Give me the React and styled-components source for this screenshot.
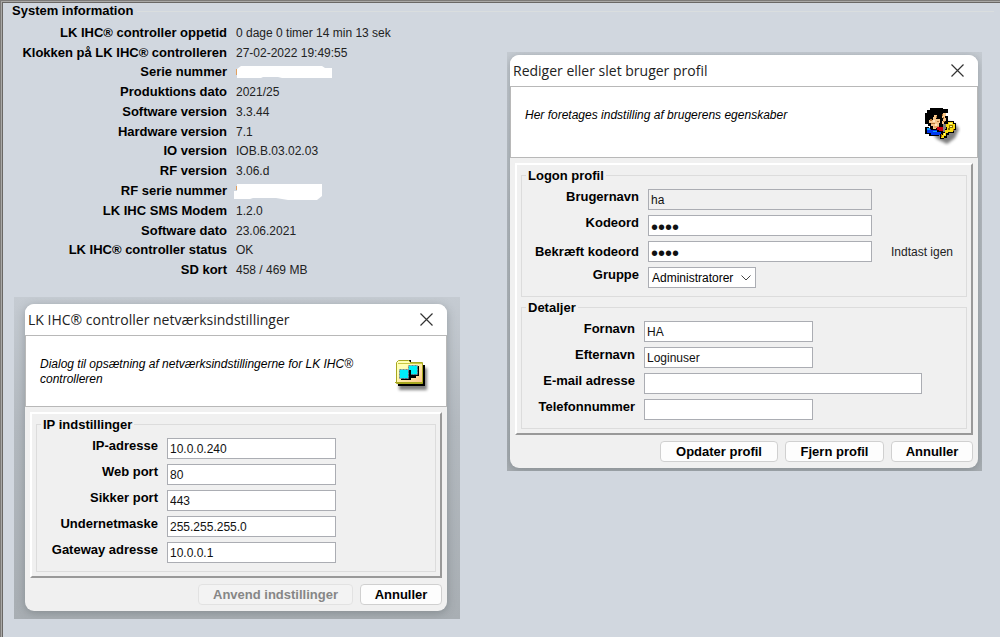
import React, { useState } from "react";
import styled, { createGlobalStyle } from "styled-components";

const systemInfo = [
  { label: "LK IHC® controller oppetid", value: "0 dage 0 timer 14 min 13 sek" },
  { label: "Klokken på LK IHC® controlleren", value: "27-02-2022 19:49:55" },
  { label: "Serie nummer", mask: "serial" },
  { label: "Produktions dato", value: "2021/25" },
  { label: "Software version", value: "3.3.44" },
  { label: "Hardware version", value: "7.1" },
  { label: "IO version", value: "IOB.B.03.02.03" },
  { label: "RF version", value: "3.06.d" },
  { label: "RF serie nummer", mask: "rf" },
  { label: "LK IHC SMS Modem", value: "1.2.0" },
  { label: "Software dato", value: "23.06.2021" },
  { label: "LK IHC® controller status", value: "OK" },
  { label: "SD kort", value: "458 / 469 MB" },
];

const networkFields = [
  { id: "ip", label: "IP-adresse", value: "10.0.0.240" },
  { id: "web", label: "Web port", value: "80" },
  { id: "secure", label: "Sikker port", value: "443" },
  { id: "mask", label: "Undernetmaske", value: "255.255.255.0" },
  { id: "gateway", label: "Gateway adresse", value: "10.0.0.1" },
];

const detailFields = [
  { id: "firstname", label: "Fornavn", value: "HA" },
  { id: "lastname", label: "Efternavn", value: "Loginuser" },
  { id: "email", label: "E-mail adresse", value: "", wide: true },
  { id: "phone", label: "Telefonnummer", value: "" },
];

const CloseIcon = () => (
  <svg width="13" height="13" viewBox="0 0 13 13" aria-hidden="true">
    <path d="M0.5 0.5 L12.5 12.5 M12.5 0.5 L0.5 12.5" stroke="#333" strokeWidth="1.2" fill="none" />
  </svg>
);

const FolderIcon = () => (
  <svg width="35" height="40" viewBox="0 -2 35 40" aria-hidden="true">
    <defs>
      <linearGradient id="folder" x1="0" y1="0" x2="1" y2="1">
        <stop offset="0.3" stopColor="#ffffb4" />
        <stop offset="1" stopColor="#ffc48c" />
      </linearGradient>
      <filter id="folderShadow" x="-20%" y="-20%" width="140%" height="140%">
        <feGaussianBlur stdDeviation="1.5" />
      </filter>
    </defs>
    <rect x="4" y="9" width="28" height="22" fill="#000" opacity="0.5" filter="url(#folderShadow)" />
    <path d="M3 6h27v21H3z" fill="#000" />
    <path d="M14 1h2v2h11v2H15z" fill="#000" />
    <path d="M1.5 24.5V3.5l2-2h10l2 2h12v21z" fill="url(#folder)" stroke="#a8a820" />
    <path d="M3 4.5h24" stroke="#c8c840" />
    <path d="M15 7h9v10h-3v2H15z" fill="#000" />
    <rect x="13.5" y="6.5" width="9" height="9" fill="#00f0f8" stroke="#80808c" strokeDasharray="2 1" />
    <path d="M6 11h10v10H6z" fill="#000" />
    <rect x="4.5" y="10.5" width="9" height="9" fill="#00f0f8" stroke="#80808c" strokeDasharray="2 1" />
    <path d="M0 23.5h28" stroke="#a8a820" />
  </svg>
);

const UserIcon = () => (
  <svg width="36" height="38" viewBox="0 0 36 38" aria-hidden="true">
    <defs>
      <filter id="userShadow" x="-20%" y="-20%" width="140%" height="150%">
        <feGaussianBlur stdDeviation="1.5" />
      </filter>
    </defs>
    <path
      d="M8 26l10-14 12 4 4 5-4 9-8 6-10-5z"
      fill="#000"
      opacity="0.5"
      filter="url(#userShadow)"
    />
    <path d="M5 0h13v1h5v4h-2v3h2v8h-5v4h-3v3H5v-5H3v-2H0V5h2V2h3z" fill="#000" />
    <path d="M9 7h3v3h-1v1h4v4h-1v4h-3v2H8v-3H6v-3H4v-3h4V9h1z" fill="#f8c88c" />
    <path d="M5 11h2v2H5zM11 8h1v2h-1zM6 15h4v1H6zM12 13h2v1h-2z" fill="#b87838" />
    <path d="M8 12h2v2H8zM10 16h2v2h-2z" fill="#ffe8c0" />
    <path d="M18 5h3v3h-1v2h1v3h-2v3h-2v-3h1v-3h-1V7h1z" fill="#f8c88c" />
    <path d="M18 9h1v2h-1zM17 6h1v2h-1zM18 13h2v1h-2z" fill="#a86828" />
    <path d="M9 18h5v2H9z" fill="#e8a868" />
    <path d="M0 19h4v2h14v6h-4v1H4v-2H0z" fill="#000" />
    <path d="M2 21h4v1h6v2h4v3H6v-2H2z" fill="#0038f0" />
    <path d="M2 20h3v2H2zM8 23h4v1H8z" fill="#10a0ff" />
    <path d="M12 19h6v4h-4v-1h-2z" fill="#c80010" />
    <path d="M23 13h6v2h2v7h-2v3h-5v2h-2v3h-3v1h-4v-5h2v-2h3v-3h1v-6h2z" fill="#000" />
    <path d="M23 14h5v2h2v5h-2v3h-5v1h-2v3h-2v2h-3v-3h2v-2h2v-3h2v-3h-1v-3h2z" fill="#f8dc10" />
    <path d="M24 17h4v3h-3v2h-2v-2h1z" fill="#8c7400" />
    <path d="M24 15h3v1h-3zM25 18h2v1h-2zM19 25h1v2h-1z" fill="#ffffa0" />
    <path d="M16 26h1v3h-1zM28 21h1v2h-1z" fill="#b86c00" />
  </svg>
);

// painted-over serial numbers
const MaskedValue = ({ kind }) =>
  kind === "serial" ? (
    <svg width="98" height="16" viewBox="0 0 98 16" role="img" aria-label="skjult">
      <path d="M0 5h2v6H0z" fill="#e0a060" />
      <path d="M1 5l4-3h81l3 2h7v10H46l-4-1H27l-2 1H1z" fill="#fff" />
    </svg>
  ) : (
    <svg width="98" height="18" viewBox="0 0 98 18" role="img" aria-label="skjult">
      <path d="M0 4h2v4H0z" fill="#e0a060" />
      <path d="M1 2h85v12l-5 4H52l-12-2H17l-3 1H-2V9h3z" fill="#fff" />
    </svg>
  );

const Field = ({ id, label, variant, hint, centered, children, value, ...rest }) => {
  const [text, setText] = useState(value);
  return (
    <FieldRow $variant={variant}>
      <Label htmlFor={id} $centered={centered}>
        {label}
      </Label>
      {children || (
        <TextInput id={id} value={text} onChange={(e) => setText(e.target.value)} {...rest} />
      )}
      {hint && <Hint>{hint}</Hint>}
    </FieldRow>
  );
};

const Dialog = ({ title, text, icon, children, buttons }) => (
  <Window role="dialog" aria-label={title}>
    <TitleBar>
      <Title>{title}</Title>
      <CloseButton aria-label="Luk">
        <CloseIcon />
      </CloseButton>
    </TitleBar>
    <Banner>
      <p>{text}</p>
      {icon}
    </Banner>
    <Panel>{children}</Panel>
    <ButtonRow>{buttons}</ButtonRow>
  </Window>
);

const App = () => {
  return (
    <>
      <GlobalStyle />
      <Page>
        <PageTitle>System information</PageTitle>
        <LeftColumn>
          <InfoList>
            {systemInfo.map(({ label, value, mask }) => (
              <InfoRow key={label}>
                <dt>{label}</dt>
                <dd>{mask ? <MaskedValue kind={mask} /> : value}</dd>
              </InfoRow>
            ))}
          </InfoList>

          {/* network settings */}
          <Backdrop $network>
            <Dialog
              title="LK IHC® controller netværksindstillinger"
              text="Dialog til opsætning af netværksindstillingerne for LK IHC® controlleren"
              icon={<FolderIcon />}
              buttons={
                <>
                  <Button $width={155} disabled>
                    Anvend indstillinger
                  </Button>
                  <Button $width={82}>Annuller</Button>
                </>
              }
            >
              <Group>
                <Legend>IP indstillinger</Legend>
                {networkFields.map((field) => (
                  <Field key={field.id} {...field} variant="network" $width={169} />
                ))}
              </Group>
            </Dialog>
          </Backdrop>
        </LeftColumn>

        {/* user profile */}
        <RightColumn>
          <Backdrop>
            <Dialog
              title="Rediger eller slet bruger profil"
              text="Her foretages indstilling af brugerens egenskaber"
              icon={<UserIcon />}
              buttons={
                <>
                  <Button $width={118}>Opdater profil</Button>
                  <Button $width={99}>Fjern profil</Button>
                  <Button $width={82}>Annuller</Button>
                </>
              }
            >
              <Group>
                <Legend>Logon profil</Legend>
                <Field id="username" label="Brugernavn" value="ha" readOnly $width={224} />
                <Field id="password" label="Kodeord" value="abcd" type="password" $width={224} />
                <Field
                  id="confirm"
                  label="Bekræft kodeord"
                  value="abcd"
                  type="password"
                  hint="Indtast igen"
                  centered
                  $width={224}
                />
                <Field id="group" label="Gruppe">
                  <SelectBox>
                    <select id="group" defaultValue="admin">
                      <option value="admin">Administratorer</option>
                    </select>
                    <svg width="10" height="6" viewBox="0 0 10 6" aria-hidden="true">
                      <path d="M0.5 0.5 L5 5 L9.5 0.5" stroke="#444" fill="none" />
                    </svg>
                  </SelectBox>
                </Field>
              </Group>
              <Group>
                <Legend>Detaljer</Legend>
                {detailFields.map(({ wide, ...field }) => (
                  <Field key={field.id} {...field} variant="details" $width={wide ? 278 : 169} />
                ))}
              </Group>
            </Dialog>
          </Backdrop>
        </RightColumn>
      </Page>
    </>
  );
};

const GlobalStyle = createGlobalStyle`
  * {
    box-sizing: border-box;
  }
  body {
    margin: 0;
    background: #d1d7df;
    color: #000;
    font-family: "Liberation Sans", Arial, sans-serif;
    font-size: 12px;
  }
`;

const Page = styled.main`
  min-height: 100vh;
  display: grid;
  grid-template-columns: minmax(0, 446fr) minmax(0, 475fr);
  grid-template-rows: auto 1fr;
  column-gap: 47px;
  padding: 2px 18px 18px 13px;
  border: solid #7c7a78;
  border-width: 1px 0 0 1px;
  box-shadow: inset 1px 1px #a9a8a6, inset 2px 2px #696765;
`;

const PageTitle = styled.h1`
  grid-column: 1 / -1;
  display: flex;
  align-items: center;
  gap: 4px;
  margin: 0 -12px 0 -2px;
  font-size: 13px;
  line-height: 16px;
  &::after {
    content: "";
    flex: 1;
    border-top: 1px solid #dadedf;
  }
`;

const LeftColumn = styled.section`
  display: flex;
  flex-direction: column;
`;

const RightColumn = styled.section`
  padding-top: 33px;
`;

const InfoList = styled.dl`
  display: grid;
  grid-auto-rows: 1fr;
  min-height: 257px;
  margin: 4px 0 17px;
`;

const InfoRow = styled.div`
  display: grid;
  grid-template-columns: 213px 1fr;
  column-gap: 9px;
  align-items: center;
  line-height: 16px;
  dt {
    font-size: 13px;
    font-weight: 700;
    text-align: right;
    white-space: nowrap;
  }
  dd {
    margin: 0;
    color: #222;
  }
  svg {
    display: block;
    overflow: visible;
  }
`;

const Backdrop = styled.div`
  padding: ${({ $network }) => ($network ? "7px 13px 8px 11px" : "3px 4px 3px 3px")};
  background: linear-gradient(#c5cbd2, #b3b9bf 40%, #a8aeb3);
  overflow: hidden;
`;

const Window = styled.div`
  display: flex;
  flex-direction: column;
  background: #f0f0f0;
  border-radius: 9px;
  overflow: hidden;
  box-shadow: 0 2px 8px rgba(70, 76, 80, 0.35);
`;

const TitleBar = styled.header`
  display: flex;
  align-items: center;
  justify-content: space-between;
  height: 31px;
  padding: 0 10px 0 3px;
  background: #fff;
`;

const Title = styled.h2`
  margin: 0;
  color: #222;
  font-family: "Open Sans", "Segoe UI", sans-serif;
  font-size: 14px;
  font-weight: 400;
  white-space: nowrap;
`;

const CloseButton = styled.button`
  display: flex;
  padding: 4px;
  border: 0;
  background: none;
`;

const Banner = styled.div`
  display: flex;
  justify-content: space-between;
  height: 72px;
  padding: 21px 16px 0 14px;
  background: #fff;
  border: 1px solid #b8b8b8;
  p {
    max-width: 330px;
    margin: 0;
    font-style: italic;
    line-height: 15px;
  }
`;

const Panel = styled.div`
  display: flex;
  flex-direction: column;
  gap: 3px;
  margin: 5px 5px 0;
  padding: 3px 4px 4px;
  border: 2px solid;
  border-color: #fff #999 #999 #fff;
`;

const Group = styled.fieldset`
  display: flex;
  flex-direction: column;
  gap: 5px;
  min-width: 0;
  margin: 0;
  padding: 6px 0 8px;
  border: 1px solid #dcdcdc;
`;

const Legend = styled.legend`
  margin-left: 4px;
  padding: 0 2px;
  font-size: 13px;
  font-weight: 700;
  line-height: 15px;
`;

const labelWidths = { network: 121, details: 113 };

const FieldRow = styled.div`
  display: grid;
  grid-template-columns: ${({ $variant }) => labelWidths[$variant] || 117}px auto 1fr;
  column-gap: 9px;
  align-items: center;
`;

const Label = styled.label`
  padding-bottom: ${({ $centered }) => ($centered ? "0" : "5px")};
  font-size: 13px;
  font-weight: 700;
  line-height: 16px;
  text-align: right;
  white-space: nowrap;
`;

const TextInput = styled.input`
  width: ${({ $width }) => $width}px;
  height: 21px;
  padding: 0 2px;
  border: 1px solid #abadb3;
  border-radius: 0;
  background: ${({ readOnly }) => (readOnly ? "#f0f0f0" : "#fff")};
  color: #111;
  font: 12px "Liberation Sans", Arial, sans-serif;
  &[type="password"] {
    padding-top: 3px;
    font-size: 20px;
    line-height: 16px;
  }
`;

const Hint = styled.span`
  padding-left: 10px;
  color: #222;
`;

const SelectBox = styled.span`
  display: flex;
  align-items: center;
  height: 21px;
  padding-right: 4px;
  border: 1px solid #abadb3;
  background: #fff;
  select {
    width: 92px;
    padding: 0 3px;
    border: 0;
    appearance: none;
    background: transparent;
    font: 12px "Liberation Sans", Arial, sans-serif;
  }
`;

const ButtonRow = styled.footer`
  display: flex;
  justify-content: flex-end;
  gap: 7px;
  padding: 6px 5px;
`;

const Button = styled.button`
  width: ${({ $width }) => $width}px;
  height: 21px;
  padding: 0;
  border: 1px solid #d0d0d0;
  border-radius: 4px;
  background: #fdfdfd;
  color: #000;
  font: 700 13px "Liberation Sans", Arial, sans-serif;
  &:disabled {
    border-color: #e2e2e2;
    background: #f3f3f3;
    color: #868686;
  }
`;

export default App;
